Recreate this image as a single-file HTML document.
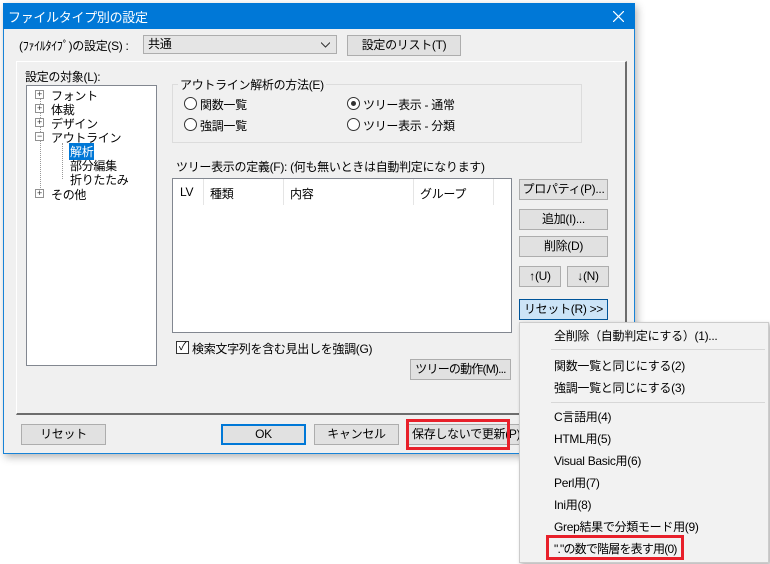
<!DOCTYPE html>
<html><head><meta charset="utf-8"><style>
*{box-sizing:border-box;margin:0;padding:0}
body{width:770px;height:564px;background:#fff;position:relative;overflow:hidden;font-family:"Liberation Sans","Noto Sans CJK JP",sans-serif;font-size:12px;color:#000;letter-spacing:-0.3px}
.a{position:absolute;white-space:nowrap}
.btn{position:absolute;background:#e1e1e1;border:1px solid #adadad;text-align:center;line-height:18px;font-size:12px;white-space:nowrap;overflow:hidden}
.rad{position:absolute;width:13px;height:13px;border:1px solid #333;border-radius:50%;background:#fff}
.hs{position:absolute;top:0;width:1px;height:26px;background:#e5e5e5}
.mi{position:absolute;left:34px;font-size:12px;white-space:nowrap}
.pl{position:absolute;width:9px;height:9px;border:1px solid #919191;background:#fff;font-size:9px;line-height:7px;text-align:center;color:#333}
</style></head><body>
<div class="a" style="left:3px;top:3px;width:632px;height:451px;background:#f0f0f0;border:1px solid #1883d7;box-shadow:2px 3px 8px rgba(0,0,0,.3)"></div>
<div class="a" style="left:3px;top:3px;width:632px;height:26px;background:#0078d7"></div>
<div class="a" style="left:8px;top:7px;color:#fff;font-size:13px">ファイルタイプ別の設定</div>
<svg class="a" style="left:613px;top:11px" width="11" height="11"><path d="M0 0L11 11M11 0L0 11" stroke="#fff" stroke-width="1.2"/></svg>

<div class="a" style="left:19px;top:37px">(ﾌｧｲﾙﾀｲﾌﾟ)の設定(S) :</div>
<div class="a" style="left:143px;top:35px;width:194px;height:19px;border:1px solid #adadad;background:#e5e5e5;padding-left:4px;line-height:17px">共通<svg style="position:absolute;right:6px;top:6px" width="9" height="6"><path d="M0 0.5L4.5 5L9 0.5" stroke="#333" fill="none"/></svg></div>
<div class="btn" style="left:347px;top:35px;width:114px;height:21px">設定のリスト(T)</div>

<div class="a" style="left:16px;top:61px;width:611px;height:354px;border-top:1px solid #fff;border-left:1px solid #fff;border-right:2px solid #6d6d6d;border-bottom:2px solid #6d6d6d"></div>

<div class="a" style="left:25px;top:68px">設定の対象(L):</div>
<div class="a" style="left:26px;top:85px;width:131px;height:281px;background:#fff;border:1px solid #828790"></div>
<div class="a" style="left:40px;top:96px;width:0;height:98px;border-left:1px dotted #999"></div>
<div class="a" style="left:62px;top:143px;width:0;height:36px;border-left:1px dotted #999"></div>
<div class="pl" style="left:35px;top:90px">+</div><div class="a" style="left:51px;top:87px">フォント</div>
<div class="pl" style="left:35px;top:104px">+</div><div class="a" style="left:51px;top:101px">体裁</div>
<div class="pl" style="left:35px;top:118px">+</div><div class="a" style="left:51px;top:115px">デザイン</div>
<div class="pl" style="left:35px;top:132px">−</div><div class="a" style="left:51px;top:129px">アウトライン</div>
<div class="a" style="left:69px;top:143px;background:#0078d7;color:#fff;padding:0 1px">解析</div>
<div class="a" style="left:70px;top:157px">部分編集</div>
<div class="a" style="left:70px;top:171px">折りたたみ</div>
<div class="pl" style="left:35px;top:189px">+</div><div class="a" style="left:51px;top:186px">その他</div>

<div class="a" style="left:172px;top:84px;width:410px;height:59px;border:1px solid #dcdcdc"></div>
<div class="a" style="left:178px;top:76px;background:#f0f0f0;padding:0 2px">アウトライン解析の方法(E)</div>
<div class="rad" style="left:184px;top:97px"></div><div class="a" style="left:200px;top:96px">関数一覧</div>
<div class="rad" style="left:184px;top:118px"></div><div class="a" style="left:200px;top:117px">強調一覧</div>
<div class="rad" style="left:347px;top:97px"><div style="position:absolute;left:3px;top:3px;width:5px;height:5px;border-radius:50%;background:#333"></div></div><div class="a" style="left:363px;top:96px">ツリー表示 - 通常</div>
<div class="rad" style="left:347px;top:118px"></div><div class="a" style="left:363px;top:117px">ツリー表示 - 分類</div>

<div class="a" style="left:176px;top:158px">ツリー表示の定義(F):  (何も無いときは自動判定になります)</div>
<div class="a" style="left:172px;top:178px;width:340px;height:155px;background:#fff;border:1px solid #828790">
<div class="hs" style="left:30px"></div><div class="hs" style="left:110px"></div><div class="hs" style="left:240px"></div><div class="hs" style="left:320px"></div>
<div class="a" style="left:7px;top:6px">LV</div><div class="a" style="left:37px;top:6px">種類</div><div class="a" style="left:117px;top:6px">内容</div><div class="a" style="left:247px;top:6px">グループ</div>
</div>
<div class="btn" style="left:519px;top:179px;width:89px;height:21px">プロパティ(P)...</div>
<div class="btn" style="left:519px;top:209px;width:89px;height:21px">追加(I)...</div>
<div class="btn" style="left:519px;top:236px;width:89px;height:21px">削除(D)</div>
<div class="btn" style="left:519px;top:266px;width:42px;height:21px">↑(U)</div>
<div class="btn" style="left:567px;top:266px;width:42px;height:21px">↓(N)</div>
<div class="btn" style="left:519px;top:299px;width:89px;height:21px;background:#cce4f7;border-color:#005499">リセット(R) &gt;&gt;</div>

<div class="a" style="left:176px;top:341px;width:13px;height:13px;border:1px solid #333;background:#fff;font-size:11px;line-height:11px;text-align:center">✓</div>
<div class="a" style="left:192px;top:340px">検索文字列を含む見出しを強調(G)</div>
<div class="btn" style="left:410px;top:359px;width:101px;height:21px;letter-spacing:-0.8px">ツリーの動作(M)...</div>

<div class="btn" style="left:21px;top:424px;width:85px;height:21px">リセット</div>
<div class="btn" style="left:221px;top:424px;width:85px;height:21px;border:2px solid #0078d7;line-height:17px">OK</div>
<div class="btn" style="left:314px;top:424px;width:85px;height:21px">キャンセル</div>
<div class="btn" style="left:407px;top:424px;width:120px;height:21px;text-align:left;padding-left:4px">保存しないで更新(P)</div>
<div class="a" style="left:406px;top:419px;width:104px;height:31px;border:3px solid #e8202a"></div>

<div class="a" style="left:519px;top:322px;width:250px;height:241px;background:#f2f2f2;border:1px solid #ccc;box-shadow:2px 2px 4px rgba(0,0,0,.3)">
<div class="mi" style="top:4px">全削除（自動判定にする）(1)...</div>
<div class="a" style="left:31px;top:26px;width:214px;height:1px;background:#d7d7d7"></div>
<div class="mi" style="top:34px">関数一覧と同じにする(2)</div>
<div class="mi" style="top:56px">強調一覧と同じにする(3)</div>
<div class="a" style="left:31px;top:79px;width:214px;height:1px;background:#d7d7d7"></div>
<div class="mi" style="top:85px">C言語用(4)</div>
<div class="mi" style="top:107px">HTML用(5)</div>
<div class="mi" style="top:129px">Visual Basic用(6)</div>
<div class="mi" style="top:151px">Perl用(7)</div>
<div class="mi" style="top:173px">Ini用(8)</div>
<div class="mi" style="top:195px">Grep結果で分類モード用(9)</div>
<div class="mi" style="top:217px;letter-spacing:-0.8px">"."の数で階層を表す用(0)</div>
</div>
<div class="a" style="left:546px;top:535px;width:138px;height:25px;border:3px solid #e8202a"></div>
</body></html>
